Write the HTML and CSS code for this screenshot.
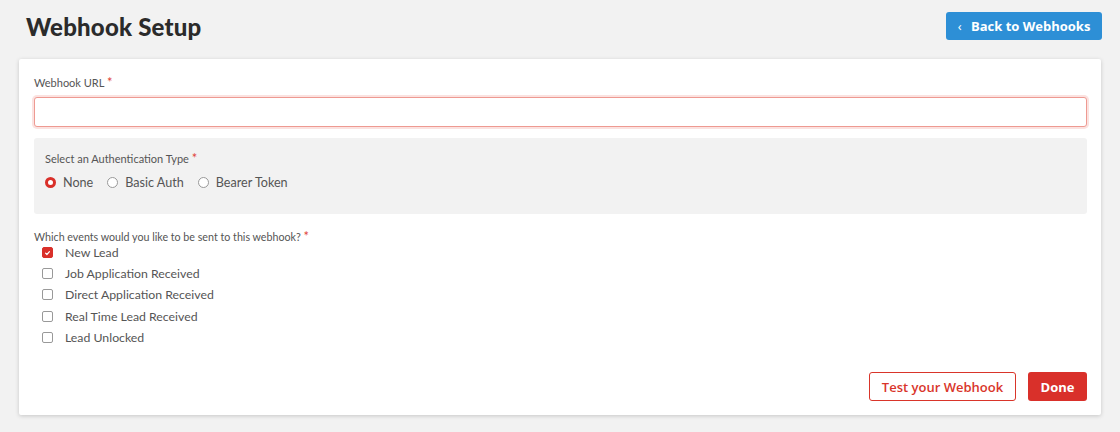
FILE: index.html
```html
<!DOCTYPE html>
<html>
<head>
<meta charset="utf-8">
<link rel="stylesheet" href="styles.css">
</head>
<body>
<div class="page">
  <header class="header">
    <h1 class="title">Webhook Setup</h1>
    <button class="btn btn-blue"><span class="chev">&#8249;</span> Back to Webhooks</button>
  </header>
  <section class="card">
    <label class="label">Webhook URL <span class="req">*</span></label>
    <input class="input" type="text">
    <div class="authbox">
      <div class="label">Select an Authentication Type <span class="req">*</span></div>
      <div class="radios">
        <span class="opt"><span class="radio on"></span>None</span>
        <span class="opt"><span class="radio"></span>Basic Auth</span>
        <span class="opt"><span class="radio"></span>Bearer Token</span>
      </div>
    </div>
    <div class="label events-label">Which events would you like to be sent to this webhook? <span class="req">*</span></div>
    <ul class="checks">
      <li class="crow"><span class="cbox on"><svg viewBox="0 0 12 12" width="12" height="12"><path d="M3.4 6.2 L5.2 8 L8.6 4.2" fill="none" stroke="#fff" stroke-width="1.6" stroke-linecap="round" stroke-linejoin="round"/></svg></span>New Lead</li>
      <li class="crow"><span class="cbox"></span>Job Application Received</li>
      <li class="crow"><span class="cbox"></span>Direct Application Received</li>
      <li class="crow"><span class="cbox"></span>Real Time Lead Received</li>
      <li class="crow"><span class="cbox"></span>Lead Unlocked</li>
    </ul>
    <div class="actions">
      <button class="btn btn-outline">Test your Webhook</button>
      <button class="btn btn-red">Done</button>
    </div>
  </section>
</div>
</body>
</html>
```
FILE: styles.css
```css
* { box-sizing: border-box; }
html, body { margin: 0; padding: 0; }
body {
  background: #f2f2f2;
  font-family: "Lato", "Open Sans", sans-serif;
  color: #555;
  width: 1120px;
  height: 432px;
  overflow: hidden;
}
.page { padding: 12px 18px 0 19px; }
.header {
  display: flex;
  justify-content: space-between;
  align-items: center;
  height: 28px;
  margin-bottom: 19px;
}
.title {
  margin: 0 0 0 7px;
  font-family: "Lato", sans-serif;
  font-weight: 900;
  font-size: 24px;
  color: #2b2b2b;
  letter-spacing: 0.2px;
}
.btn {
  font-family: "Open Sans", sans-serif;
  font-weight: 700;
  font-size: 13px;
  border-radius: 3px;
  cursor: pointer;
  height: 29px;
  padding: 0;
}
.btn-blue {
  background: #2d8fd6;
  color: #fff;
  border: none;
  width: 156px;
  height: 28px;
}
.chev { font-size: 13px; margin-right: 6px; font-weight: 400; }
.card {
  width: 1082px;
  height: 356px;
  background: #fff;
  box-shadow: 0 1px 4px rgba(0,0,0,0.18);
  border-radius: 2px;
  padding: 15px 14px 14px 15px;
  display: flex;
  flex-direction: column;
}
.label {
  display: block;
  font-size: 11px;
  line-height: 16px;
  color: #555;
}
.events-label { font-size: 10.7px; }
.req { color: #e0453a; font-size: 13px; }
.input {
  margin-top: 6px;
  height: 30px;
  width: 100%;
  border: 1px solid #ee9a92;
  border-radius: 3px;
  box-shadow: 0 0 0 2px rgba(240,140,130,0.25);
  outline: none;
}
.authbox {
  margin-top: 11px;
  height: 76px;
  background: #f2f2f2;
  border-radius: 3px;
  padding: 12px 11px;
}
.radios {
  display: flex;
  gap: 14px;
  margin-top: 7px;
  height: 16px;
  align-items: center;
}
.opt {
  display: flex;
  align-items: center;
  font-size: 12.6px;
  color: #555;
}
.radio {
  width: 11px; height: 11px;
  border-radius: 50%;
  border: 1px solid #999;
  background: #fff;
  margin-right: 7px;
}
.radio.on { border: 3.5px solid #d9302a; }
.events-label { margin-top: 14px; }
.checks {
  list-style: none;
  margin: -3px 0 0;
  padding: 0 0 0 8px;
}
.crow {
  display: flex;
  align-items: center;
  height: 21.2px;
  font-size: 12.3px;
  color: #555;
}
.cbox {
  width: 11px; height: 11px;
  border: 1px solid #999;
  border-radius: 2px;
  margin-right: 12px;
  display: flex;
  align-items: center;
  justify-content: center;
  background: #fff;
}
.cbox.on { background: #d9302a; border-color: #d9302a; }
.actions {
  margin-top: auto;
  display: flex;
  justify-content: flex-end;
  gap: 12px;
}
.btn-outline {
  background: #fff;
  border: 1px solid #d9352a;
  color: #d9352a;
  width: 147px;
  font-weight: 600;
}
.btn-red {
  background: #d9302a;
  border: none;
  color: #fff;
  width: 59px;
}
```
